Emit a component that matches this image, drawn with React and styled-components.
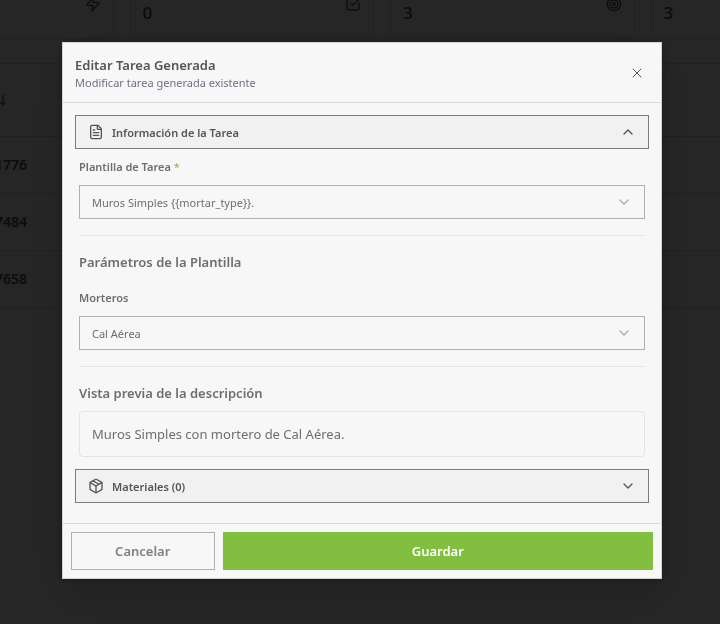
import React, { useState } from "react";
import styled, { createGlobalStyle } from "styled-components";
import {
  ArrowUpDown,
  ChevronDown,
  ChevronUp,
  FileText,
  Package,
  SquareCheckBig,
  Target,
  X,
  Zap,
} from "lucide-react";

const GlobalStyle = createGlobalStyle`
  *, *::before, *::after { box-sizing: border-box; }
  html, body, #root { height: 100%; }
  body {
    margin: 0;
    overflow: hidden;
    background: #fcfcfc;
    color: #6e6e6e;
    font-family: "Noto Sans", "Open Sans", sans-serif;
    font-size: 11px;
    line-height: 16px;
  }
  button, select { font: inherit; color: inherit; }
  h1, h2, p { margin: 0; }
`;

const Page = styled.main`
  height: 100%;
  overflow: hidden;
  color: #505050;
`;

const Stats = styled.section`
  display: grid;
  grid-template-columns: repeat(4, 1fr);
  gap: 16px;
  height: 39px;
  margin: 0 -175px 24px -131px;
`;

const StatCard = styled.article`
  display: flex;
  justify-content: space-between;
  align-items: flex-start;
  padding: 0 12px;
  border: 1px solid #dedede;
  border-top: 0;
  border-radius: 0 0 8px 8px;
`;

const StatValue = styled.span`
  font-size: 17px;
  font-weight: 500;
  line-height: 26px;
`;

const StatIcon = styled.span`
  display: flex;
  height: 16px;
  margin-top: -4px;
`;

const Table = styled.table`
  width: 100%;
  border-collapse: collapse;
  border-top: 1px solid #dedede;
  text-align: left;
`;

const HeadCell = styled.th`
  height: 73px;
  padding: 0;
  border-bottom: 1px solid #d4d4d4;

  svg { display: block; margin-left: -7px; }
`;

const Cell = styled.td`
  height: 57px;
  padding: 0;
  border-bottom: 1px solid #d4d4d4;
  font-size: 14px;
  font-weight: 600;

  span { margin-left: -5px; }
`;

const Overlay = styled.div`
  position: fixed;
  inset: 0;
  display: flex;
  align-items: center;
  justify-content: center;
  padding: 0 0 3px 4px;
  background: rgba(0, 0, 0, 0.85);
`;

const Dialog = styled.form`
  width: 600px;
  max-width: 100%;
  border: 1px solid #d4d4d4;
  background: #f7f7f7;
  box-shadow: 0 0 8px rgba(0, 0, 0, 0.3), 0 16px 48px rgba(0, 0, 0, 0.16);
`;

const Header = styled.header`
  display: flex;
  align-items: center;
  justify-content: space-between;
  padding: 12px 16px 11px 12px;
  border-bottom: 1px solid #d9d9d9;
`;

const Title = styled.h1`
  color: #555;
  font-size: 13px;
  font-weight: 600;
  line-height: 20px;
`;

const Subtitle = styled.p`
  color: #6b7280;
`;

const CloseButton = styled.button`
  display: flex;
  padding: 0;
  border: 0;
  background: none;
  color: #555;
`;

const Body = styled.div`
  padding: 12px 12px 20px;
`;

const AccordionButton = styled.button`
  display: flex;
  align-items: center;
  gap: 8px;
  width: 100%;
  height: 34px;
  padding: 0 12px;
  border: 1px solid #7c7c7c;
  background: #f1f1f1;
  color: #555;
  font-weight: 600;
  text-align: left;

  span { flex: 1; padding-top: 1px; }
`;

const Panel = styled.div`
  padding: 10px 4px 12px;
`;

const Label = styled.label`
  display: block;
  margin-bottom: 10px;
  font-weight: 600;
`;

const Required = styled.span`
  color: #82bf41;
  font-weight: 400;
`;

const SelectBox = styled.div`
  position: relative;

  svg {
    position: absolute;
    top: 9px;
    right: 13px;
    color: #aaa;
    pointer-events: none;
  }
`;

const Select = styled.select`
  display: block;
  appearance: none;
  width: 100%;
  height: 34px;
  padding: 1px 36px 0 12px;
  border: 1px solid #b0b0b0;
  border-radius: 0;
  background: transparent;
`;

const Divider = styled.hr`
  height: 1px;
  margin: 16px 0;
  border: 0;
  background: #e3e3e3;
`;

const SectionTitle = styled.h2`
  margin-bottom: ${({ $gap }) => $gap};
  font-size: 13px;
  font-weight: 600;
  line-height: 20px;
`;

const Preview = styled.p`
  padding: 12px;
  border: 1px solid #e3e3e3;
  border-radius: 4px;
  font-size: 13px;
  line-height: 20px;
`;

const Footer = styled.footer`
  display: grid;
  grid-template-columns: 1fr 3fr;
  gap: 8px;
  padding: 8px;
  border-top: 1px solid #d9d9d9;
`;

const ActionButton = styled.button`
  height: 38px;
  padding: 0;
  border: 1px solid ${({ $primary }) => ($primary ? "#82bf41" : "#b0b0b0")};
  background: ${({ $primary }) => ($primary ? "#82bf41" : "transparent")};
  color: ${({ $primary }) => ($primary ? "#fff" : "#808080")};
  font-size: 13px;
  font-weight: 600;
`;

const stats = [
  { value: "", Icon: Zap },
  { value: "0", Icon: SquareCheckBig },
  { value: "3", Icon: Target },
  { value: "3", Icon: null },
];

const rows = ["1776", "7484", "7658"];

function Accordion({ icon: Icon, title, open, onToggle }) {
  const Chevron = open ? ChevronUp : ChevronDown;
  return (
    <AccordionButton type="button" aria-expanded={open} onClick={onToggle}>
      <Icon size={16} />
      <span>{title}</span>
      <Chevron size={16} />
    </AccordionButton>
  );
}

function SelectField({ id, label, required, value }) {
  return (
    <>
      <Label htmlFor={id}>
        {label}
        {required && <Required> *</Required>}
      </Label>
      <SelectBox>
        <Select id={id} defaultValue={value}>
          <option>{value}</option>
        </Select>
        <ChevronDown size={16} />
      </SelectBox>
    </>
  );
}

export default function App() {
  const [infoOpen, setInfoOpen] = useState(true);
  const [materialsOpen, setMaterialsOpen] = useState(false);

  return (
    <>
      <GlobalStyle />
      <Page>
        <Stats>
          {stats.map(({ value, Icon }, i) => (
            <StatCard key={i}>
              <StatValue>{value}</StatValue>
              {Icon && <StatIcon><Icon size={16} /></StatIcon>}
            </StatCard>
          ))}
        </Stats>
        <Table>
          <thead>
            <tr><HeadCell><ArrowUpDown size={14} /></HeadCell></tr>
          </thead>
          <tbody>
            {rows.map((row) => (
              <tr key={row}><Cell><span>{row}</span></Cell></tr>
            ))}
          </tbody>
        </Table>
      </Page>
      <Overlay>
        <Dialog role="dialog" aria-modal="true" aria-labelledby="dialog-title">
          <Header>
            <div>
              <Title id="dialog-title">Editar Tarea Generada</Title>
              <Subtitle>Modificar tarea generada existente</Subtitle>
            </div>
            <CloseButton type="button" aria-label="Cerrar">
              <X size={16} strokeWidth={1.5} />
            </CloseButton>
          </Header>
          <Body>
            <Accordion
              icon={FileText}
              title="Información de la Tarea"
              open={infoOpen}
              onToggle={() => setInfoOpen(!infoOpen)}
            />
            {infoOpen && (
              <Panel>
                <SelectField
                  id="template"
                  label="Plantilla de Tarea"
                  required
                  value="Muros Simples {{mortar_type}}."
                />
                <Divider />
                <SectionTitle $gap="18px">Parámetros de la Plantilla</SectionTitle>
                <SelectField id="mortar" label="Morteros" value="Cal Aérea" />
                <Divider />
                <SectionTitle $gap="8px">Vista previa de la descripción</SectionTitle>
                <Preview>Muros Simples con mortero de Cal Aérea.</Preview>
              </Panel>
            )}
            <Accordion
              icon={Package}
              title="Materiales (0)"
              open={materialsOpen}
              onToggle={() => setMaterialsOpen(!materialsOpen)}
            />
          </Body>
          <Footer>
            <ActionButton type="button">Cancelar</ActionButton>
            <ActionButton type="button" $primary>Guardar</ActionButton>
          </Footer>
        </Dialog>
      </Overlay>
    </>
  );
}
